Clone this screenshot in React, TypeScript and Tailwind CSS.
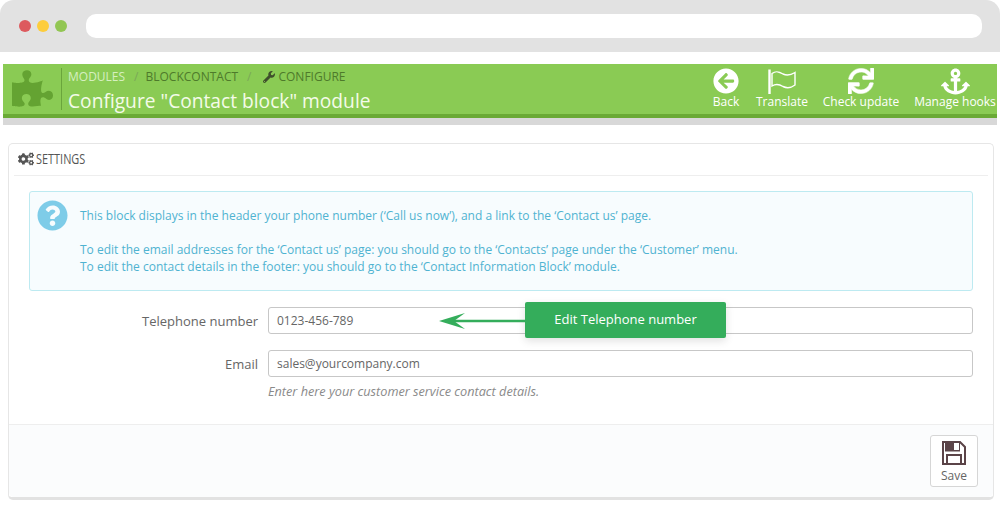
import React from "react";
import { FaPuzzlePiece, FaArrowCircleLeft, FaSync, FaAnchor, FaWrench, FaCogs, FaQuestionCircle } from "react-icons/fa";

const FlagIcon = () => (
  <svg width="30" height="25" viewBox="0 0 30 25" fill="none" stroke="#fff">
    <path d="M2.5 0.5V25" strokeWidth="2.4" />
    <path d="M5 4.5C9 1.5 12 2.5 16 5C20 7 24 6 28 3.5V16C24 19 20 19.500 16 17.500C12 15 9 14.500 5 17Z" strokeWidth="1.4" />
  </svg>
);

const SaveIcon = () => (
  <svg width="24" height="24" viewBox="0 0 24 24">
    <path d="M1 1H18L23 6V23H1Z" fill="none" stroke="#5b4448" strokeWidth="2" />
    <path d="M1 1H6V9H17V1H18V10.500H3V1Z" fill="#5b4448" />
    <path d="M6 1H12V9H6Z" fill="#5b4448" />
    <path d="M5 22.500V14H19V22.500" fill="none" stroke="#5b4448" strokeWidth="2" />
  </svg>
);

function Action({ label, icon, width }: { label: string; icon: React.ReactNode; width: string }) {
  return (
    <div className={`flex flex-col items-center ${width}`}>
      <div className="h-[26px] flex items-center justify-center">{icon}</div>
      <div className="text-[12px] leading-[17px] -mt-[1px] whitespace-nowrap text-white">{label}</div>
    </div>
  );
}

function Row({ label, value, children }: { label: string; value: string; children?: React.ReactNode }) {
  return (
    <div className="flex items-start">
      <label className="w-[259px] pr-[10px] text-right text-[13px] leading-[29px] text-[#666]">{label}</label>
      <div className="flex-1">
        <div className="h-[27px] border border-[#c7c7c7] rounded-[3px] bg-white pl-[8px] text-[12px] leading-[26px] text-[#666]">{value}</div>
        {children}
      </div>
    </div>
  );
}

export default function App() {
  return (
    <div className="relative w-[1000px] h-[516px] overflow-hidden bg-white font-['Open_Sans',sans-serif]">
      <div className="h-[52px] bg-[#e2e2e2] rounded-t-[14px] flex items-center pl-[19px]">
        <span className="w-[12px] h-[12px] rounded-full bg-[#dd5a5e]" />
        <span className="w-[12px] h-[12px] rounded-full bg-[#fdcd3c] ml-[6px]" />
        <span className="w-[12px] h-[12px] rounded-full bg-[#92c653] ml-[6px]" />
        <div className="w-[896px] h-[24px] rounded-[10px] bg-white ml-[19px]" />
      </div>

      <div className="mx-[3px] mt-[12px] h-[61px] bg-[#d8d8d8]">
        <div className="h-[54px] bg-[#8acb54] border-b-[4px] border-[#6aaa35] flex justify-between">
          <div className="flex">
            <div className="w-[58px] pl-[9px] pt-[4px]">
              <FaPuzzlePiece size={41} color="#64a332" />
            </div>
            <div className="mt-[4px] h-[42px] border-l border-[#6aa53c] pl-[6px]">
              <div className="flex items-center text-[12px] leading-[16px] text-[#4e7a2b] mt-[1px] whitespace-nowrap">
                <span className="text-[#d6efc0]">MODULES</span>
                <span className="ml-[9px] mr-[7px] text-[#7aa858]">/</span>
                <span>BLOCKCONTACT</span>
                <span className="mx-[9px] text-[#7aa858]">/</span>
                <FaWrench size={12} color="#3f4f2c" className="ml-[3px] mr-[3px]" />
                <span>CONFIGURE</span>
              </div>
              <div className="text-[19.2px] leading-[25px] mt-[3px] text-[#f4fbe9] whitespace-nowrap">Configure "Contact block" module</div>
            </div>
          </div>
          <div className="flex pt-[4px] pr-[1px]">
            <Action label="Back" width="w-[40px] mr-[10px]" icon={<FaArrowCircleLeft size={26} color="#fff" />} />
            <Action label="Translate" width="w-[52px] mr-[15px]" icon={<FlagIcon />} />
            <Action label="Check update" width="w-[76px] mr-[15px]" icon={<FaSync size={26} color="#fff" stroke="#fff" strokeWidth={10} />} />
            <Action label="Manage hooks" width="w-[82px]" icon={<FaAnchor size={29} color="#fff" />} />
          </div>
        </div>
      </div>

      <div className="ml-[8px] mr-[6px] mt-[18px] h-[357px] border border-[#e6e6e6] border-b-[3px] border-b-[#e2e2e2] rounded-[5px] flex flex-col bg-white">
        <div className="mx-[5px] h-[32px] border-b border-[#eeeeee] flex items-center pl-[4px] pb-[1px]">
          <FaCogs size={16} color="#555" />
          <span className="ml-[2px] text-[14px] leading-none text-[#555] inline-block origin-left scale-x-[0.78] whitespace-nowrap">SETTINGS</span>
        </div>

        <div className="mx-[20px] mt-[15px] h-[100px] border border-[#bdeaf1] rounded-[3px] bg-[#f7fcfe] flex">
          <div className="pl-[7px] pt-[8px] w-[50px]">
            <FaQuestionCircle size={31} color="#7ecce8" />
          </div>
          <div className="pt-[15px] text-[12px] leading-[17px] text-[#4fb3d1] whitespace-nowrap">
            <p>This block displays in the header your phone number (‘Call us now’), and a link to the ‘Contact us’ page.</p>
            <p className="mt-[17px]">To edit the email addresses for the ‘Contact us’ page: you should go to the ‘Contacts’ page under the ‘Customer’ menu.</p>
            <p>To edit the contact details in the footer: you should go to the ‘Contact Information Block’ module.</p>
          </div>
        </div>

        <div className="mt-[16px] pr-[20px] flex flex-col gap-[14px]">
          <Row label="Telephone number" value="0123-456-789" />
          <Row label="Email" value="sales@yourcompany.com">
            <p className="mt-[6px] text-[12.7px] leading-[16px] italic text-[#8a8a8a]">Enter here your customer service contact details.</p>
          </Row>
        </div>

        <div className="mt-auto h-[73px] border-t border-[#eeeeee] bg-[#fbfcfd] rounded-b-[5px] flex justify-end pt-[10px] pr-[15px]">
          <div className="w-[48px] h-[52px] border border-[#d6d6d6] rounded-[3px] bg-white flex flex-col items-center pt-[5px]">
            <SaveIcon />
            <span className="text-[12px] leading-[16px] text-[#666] mt-[3px]">Save</span>
          </div>
        </div>
      </div>

      <div className="absolute left-[525px] top-[302px] w-[201px] h-[36px] rounded-[2px] bg-[#34ad5b] shadow-[0_3px_8px_rgba(0,0,0,0.12)] text-white text-[13px] leading-[35px] text-center">Edit Telephone number</div>
      <svg className="absolute left-[438px] top-[311px]" width="88" height="20" viewBox="0 0 88 20">
        <path d="M87 10H12" stroke="#34ad5b" strokeWidth="2.500" />
        <path d="M1 10L27 2L16 10L27 18Z" fill="#34ad5b" />
      </svg>
    </div>
  );
}
